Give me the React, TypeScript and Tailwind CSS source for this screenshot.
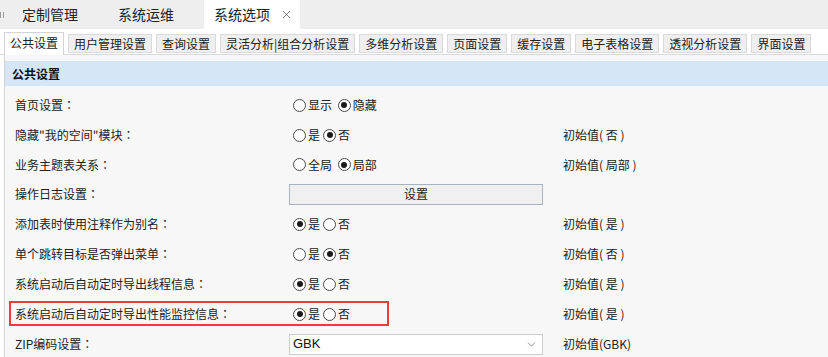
import { ChevronDown, X } from 'lucide-react'

type Option = { label: string; checked?: boolean }

type Setting = {
  label: string
  kind: 'radio' | 'button' | 'select'
  options?: Option[]
  initial?: string
  highlight?: boolean
  height?: string
}

const topTabs = ['定制管理', '系统运维', '系统选项']

const subTabs = [
  '公共设置',
  '用户管理设置',
  '查询设置',
  '灵活分析|组合分析设置',
  '多维分析设置',
  '页面设置',
  '缓存设置',
  '电子表格设置',
  '透视分析设置',
  '界面设置',
]

const settings: Setting[] = [
  { label: '首页设置', kind: 'radio', options: [{ label: '显示 ' }, { label: '隐藏', checked: true }] },
  {
    label: '隐藏"我的空间"模块',
    kind: 'radio',
    options: [{ label: '是' }, { label: '否', checked: true }],
    initial: '初始值( 否 )',
  },
  {
    label: '业务主题表关系',
    kind: 'radio',
    options: [{ label: '全局 ' }, { label: '局部', checked: true }],
    initial: '初始值( 局部 )',
    height: 'h-[29px]',
  },
  { label: '操作日志设置', kind: 'button' },
  {
    label: '添加表时使用注释作为别名',
    kind: 'radio',
    options: [{ label: '是', checked: true }, { label: '否' }],
    initial: '初始值( 是 )',
  },
  {
    label: '单个跳转目标是否弹出菜单',
    kind: 'radio',
    options: [{ label: '是' }, { label: '否', checked: true }],
    initial: '初始值( 否 )',
  },
  {
    label: '系统启动后自动定时导出线程信息',
    kind: 'radio',
    options: [{ label: '是', checked: true }, { label: '否' }],
    initial: '初始值( 是 )',
  },
  {
    label: '系统启动后自动定时导出性能监控信息',
    kind: 'radio',
    options: [{ label: '是', checked: true }, { label: '否' }],
    initial: '初始值( 是 )',
    highlight: true,
  },
  { label: 'ZIP编码设置', kind: 'select', initial: '初始值(GBK)' },
]

function Radio({ checked }: { checked?: boolean }) {
  return (
    <span className="flex h-[13px] w-[13px] shrink-0 items-center justify-center rounded-full border border-[#4a4a4a] bg-white">
      {checked && <span className="h-[6px] w-[6px] rounded-full bg-[#1a1a1a]" />}
    </span>
  )
}

function Control({ setting }: { setting: Setting }) {
  if (setting.kind === 'button') {
    return (
      <div className="flex h-[21px] w-[254px] items-center justify-center border border-[#a7b3c1] bg-[#f0f0f0] text-[12px] text-[#222]">
        设置
      </div>
    )
  }
  if (setting.kind === 'select') {
    return (
      <div className="flex h-[21px] w-[254px] items-center justify-between border border-[#cccccc] bg-white pl-[3px] pr-[4px] text-[13px] text-[#111]">
        <span className="font-['Liberation_Sans',sans-serif]">GBK</span>
        <ChevronDown size={13} strokeWidth={1.3} className="text-[#666]" />
      </div>
    )
  }
  return (
    <div className="flex items-center pl-[4px]">
      {setting.options?.map((o) => (
        <span key={o.label} className="mr-[3px] flex items-center">
          <Radio checked={o.checked} />
          <span className="ml-[2px] whitespace-pre text-[12px] text-[#222]">{o.label}</span>
        </span>
      ))}
    </div>
  )
}

export default function App() {
  return (
    <div className="relative h-[357px] w-[828px] overflow-hidden bg-white font-['Noto_Sans_CJK_SC','Microsoft_YaHei',sans-serif] text-[#222]">
      {/* app tabs */}
      <div className="flex h-[29px] items-stretch bg-[#eeeeee]">
        <div className="flex w-[12px] items-center gap-[2px]">
          <span className="h-[6px] w-px bg-[#9a9a9a]" />
          <span className="h-[6px] w-px bg-[#9a9a9a]" />
        </div>
        {topTabs.map((t, i) => (
          <div
            key={t}
            className={
              i === 2
                ? 'flex w-[96px] items-center bg-white pl-[10px] text-[14px] text-[#222]'
                : 'flex w-[96px] items-center pl-[10px] text-[14px] text-[#222]'
            }
          >
            {t}
            {i === 2 && <X size={13} strokeWidth={1.4} className="ml-[10px] text-[#555]" />}
          </div>
        ))}
      </div>

      {/* option tabs */}
      <div className="flex h-[26px] items-end gap-[4px] border-b border-[#d9d9d9] bg-white pl-[4px]">
        {subTabs.map((t, i) =>
          i === 0 ? (
            <div
              key={t}
              className="relative -mb-px flex h-[23px] items-center border border-b-0 border-[#d4d4d4] bg-white px-[5px] pb-[2px] text-[12px] text-[#222]"
            >
              {t}
            </div>
          ) : (
            <div
              key={t}
              className="mb-px flex h-[19px] items-center border border-[#dadada] bg-[#efefef] px-[5px] text-[12px] text-[#222]"
            >
              {t}
            </div>
          ),
        )}
      </div>

      {/* panel */}
      <div className="ml-[4px] h-[302px] border-l border-[#d4d4d4] bg-[#f7f7f7] pt-[6px]">
        <div className="flex h-[25px] items-center bg-[#d5e6f6] pl-[7px] text-[12px] font-bold text-[#111]">
          公共设置
        </div>
        <div className="mt-[4px]">
          {settings.map((s) => (
            <div
              key={s.label}
              className={`relative grid grid-cols-[284px_254px_1fr] items-center ${s.height ?? 'h-[30px]'}`}
            >
              <span className="pl-[10px] text-[12px] text-[#222]">
                {s.label}
                <span className="font-['Noto_Sans_CJK_JP',sans-serif]">：</span>
              </span>
              <Control setting={s} />
              <span className="pl-[20px] text-[12px] text-[#222]">{s.initial}</span>
              {s.highlight && (
                <div className="absolute left-[4px] top-[2px] h-[25px] w-[380px] border-2 border-[#ee3b3b]" />
              )}
            </div>
          ))}
        </div>
      </div>
    </div>
  )
}
